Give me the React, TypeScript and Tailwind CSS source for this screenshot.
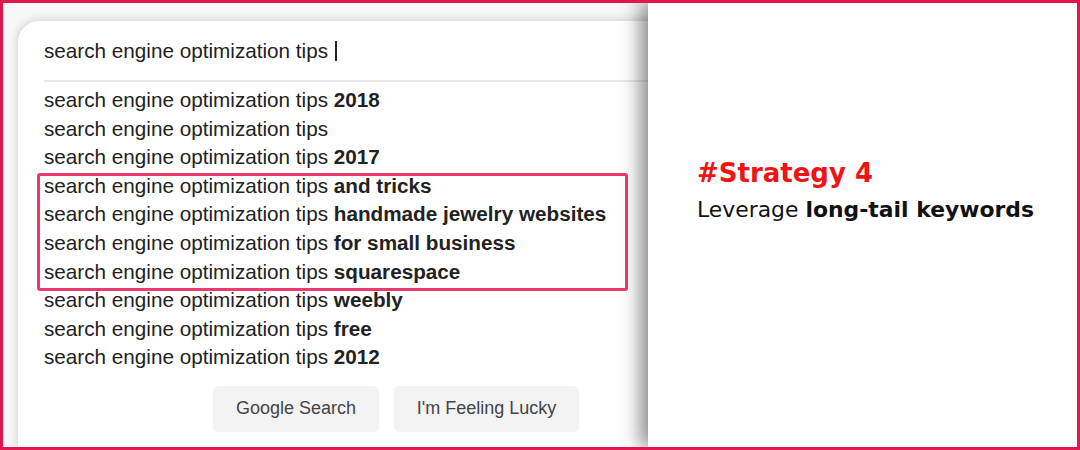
import React from 'react';

// Suggestion rows: plain prefix + bold tail
const suggestions: string[] = [
  '2018',
  '',
  '2017',
  'and tricks',
  'handmade jewelry websites',
  'for small business',
  'squarespace',
  'weebly',
  'free',
  '2012',
];

const QUERY = 'search engine optimization tips';

export default function App() {
  return (
    <div className="w-[1080px] h-[450px] border-[3px] border-[#e2164e] flex bg-white overflow-hidden">
      {/* Search mock */}
      <div className="w-[645px] shrink-0 bg-[#f7f7f7] pl-[14px] pt-[17px] flex">
        <div
          className="relative flex-1 bg-white rounded-tl-[22px] border-t border-l border-[#e2e2e2] shadow-[0_0_8px_rgba(0,0,0,0.16)] text-[#222] font-['Liberation_Sans',Arial,sans-serif]"
        >
          <div className="h-[59px] pl-[26px] flex items-center text-[20.7px]">
            <span>{QUERY}</span>
            <span className="ml-[7px] w-[1.5px] h-[20px] bg-[#222]" />
          </div>
          <div className="ml-[26px] border-t-2 border-[#e8e8e8]" />

          <ul className="pl-[26px] pt-[4px] text-[20.7px] leading-[28.6px]">
            {suggestions.map((tail, i) => (
              <li key={i} className="whitespace-nowrap">
                {QUERY}
                {tail && <b className="font-bold"> {tail}</b>}
              </li>
            ))}
          </ul>

          {/* highlight box */}
          <div className="absolute left-[19px] top-[152px] w-[591px] h-[118px] border-[3px] border-[#ec3a6e] rounded-[3px] pointer-events-none" />

          <div className="flex gap-[15px] ml-[195px] mt-[14px]">
            <button className="w-[166px] h-[46px] rounded-[5px] bg-[#f3f3f3] text-[#444] text-[18px]">
              Google Search
            </button>
            <button className="w-[185px] h-[46px] rounded-[5px] bg-[#f3f3f3] text-[#444] text-[18px]">
              I'm Feeling Lucky
            </button>
          </div>
        </div>
      </div>

      {/* Strategy text */}
      <div className="relative z-10 flex-1 bg-white shadow-[-8px_0_18px_rgba(0,0,0,0.45)] pl-[49px] pt-[155px] font-['DejaVu_Sans',sans-serif]">
        <div className="text-[#f01414] text-[26px] font-bold leading-[30px]">
          #Strategy 4
        </div>
        <div className="text-[#111] text-[21.9px] leading-[28px] mt-[8px]">
          Leverage <span className="font-bold">long-tail keywords</span>
        </div>
      </div>
    </div>
  );
}
